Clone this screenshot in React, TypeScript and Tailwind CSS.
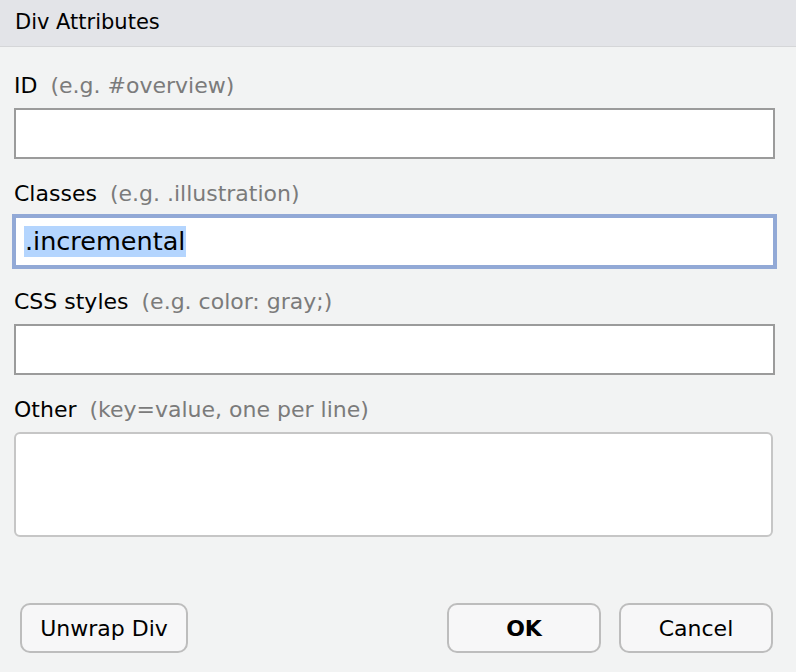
const FONT = "font-['DejaVu_Sans',_'Liberation_Sans',_sans-serif]";

function FieldLabel({ name, hint }: { name: string; hint: string }) {
  return (
    <div className="flex h-[28px] items-center whitespace-nowrap text-[22px] leading-[28px] text-black">
      <span>{name}</span>
      <span className="ml-[13px] text-[#7b7b7b]">{hint}</span>
    </div>
  );
}

function TextBox({ children, focused }: { children?: React.ReactNode; focused?: boolean }) {
  return (
    <div
      className={`flex h-[51px] items-center bg-white px-[8px] text-[25.5px] text-black ${
        focused
          ? "border-2 border-[#92a9d6] ring-2 ring-[#92a9d6]"
          : "border-2 border-[#9b9b9b]"
      }`}
    >
      {children}
    </div>
  );
}

function DialogButton({
  label,
  bold,
  width,
}: {
  label: string;
  bold?: boolean;
  width: string;
}) {
  return (
    <button
      type="button"
      className={`flex h-[50px] ${width} items-center justify-center rounded-[10px] border-2 border-[#bdbdbd] bg-[#f7f7f8] text-[22px] text-black ${
        bold ? "font-bold text-[#222]" : ""
      }`}
    >
      {label}
    </button>
  );
}

export default function App() {
  return (
    <div className={`flex h-[672px] w-full flex-col bg-[#f2f3f3] ${FONT}`}>
      {/* タイトルバー */}
      <div className="flex h-[47px] shrink-0 items-center border-b border-[#d5d6d8] bg-[#e3e4e8] px-[15px] text-[21px] text-black">
        Div Attributes
      </div>

      <div className="flex flex-col pl-[14px] pr-[21px] pt-[25px]">
        <FieldLabel name="ID" hint="(e.g. #overview)" />
        <div className="mt-[8px]">
          <TextBox />
        </div>

        <div className="mt-[21px]">
          <FieldLabel name="Classes" hint="(e.g. .illustration)" />
        </div>
        <div className="mt-[8px]">
          <TextBox focused>
            <span className="bg-[#b4d5fe] px-[1px] leading-[31px]">.incremental</span>
          </TextBox>
        </div>

        <div className="mt-[21px]">
          <FieldLabel name="CSS styles" hint="(e.g. color: gray;)" />
        </div>
        <div className="mt-[8px]">
          <TextBox />
        </div>

        <div className="mt-[21px]">
          <FieldLabel name="Other" hint="(key=value, one per line)" />
        </div>
        <div className="mr-[2px] mt-[8px] h-[105px] rounded-[6px] border-2 border-[#c6c6c6] bg-white" />
      </div>

      <div className="mt-auto flex items-center pb-[19px] pl-[20px] pr-[23px]">
        <DialogButton label="Unwrap Div" width="w-[168px]" />
        <div className="ml-auto flex gap-[18px]">
          <DialogButton label="OK" bold width="w-[154px]" />
          <DialogButton label="Cancel" width="w-[154px]" />
        </div>
      </div>
    </div>
  );
}
